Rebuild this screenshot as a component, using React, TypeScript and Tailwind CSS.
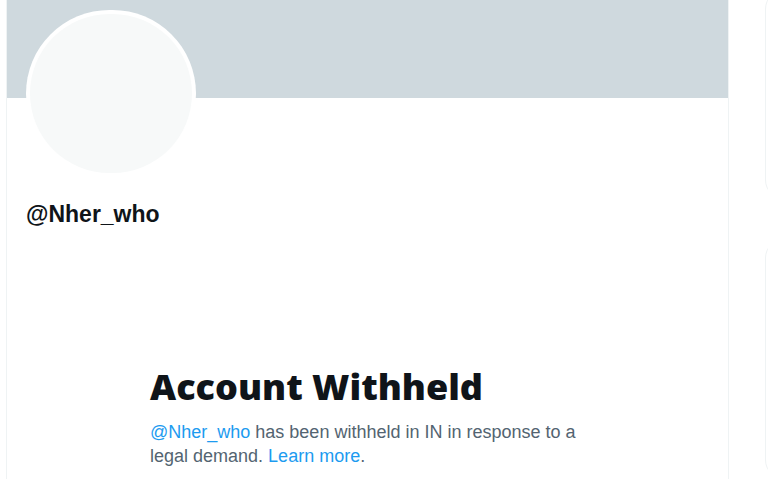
import React from "react";

export default function App() {
  return (
    <div className="flex w-[768px] h-[479px] overflow-hidden bg-white" style={{ fontFamily: '"Liberation Sans", Arial, sans-serif' }}>
      <div className="w-[6px] shrink-0" />
      <div className="w-[723px] shrink-0 border-l border-r border-[#eff3f4] flex flex-col">
        <div className="h-[98px] bg-[#cfd9de]" />
        <div className="pl-[19px]">
          <div className="relative -mt-[88px] w-[170px] h-[167px] rounded-full bg-white p-[4px]">
            <div className="w-full h-full rounded-full bg-[#f7f9f9]" />
          </div>
          <div className="mt-[22px] text-[23px] leading-[30px] font-bold text-[#0f1419]">@Nher_who</div>
        </div>
        <div className="ml-[143px] w-[440px] mt-[136px]">
          <div className="text-[36px] leading-[44px] font-extrabold text-[#0f1419]" style={{ fontFamily: '"Open Sans", sans-serif' }}>Account Withheld</div>
          <div className="mt-[11px] text-[18px] leading-[24px] text-[#536471]">
            <span className="text-[#1d9bf0]">@Nher_who</span> has been withheld in IN in response to a legal demand.{" "}
            <span className="text-[#1d9bf0]">Learn more</span>.
          </div>
        </div>
      </div>
      <div className="ml-[36px] flex flex-col gap-[40px] -mt-[10px]">
        <div className="w-[300px] h-[260px] rounded-[19px] border border-[#eff3f4]" />
        <div className="w-[300px] h-[300px] rounded-[19px] border border-[#eff3f4]" />
      </div>
    </div>
  );
}
